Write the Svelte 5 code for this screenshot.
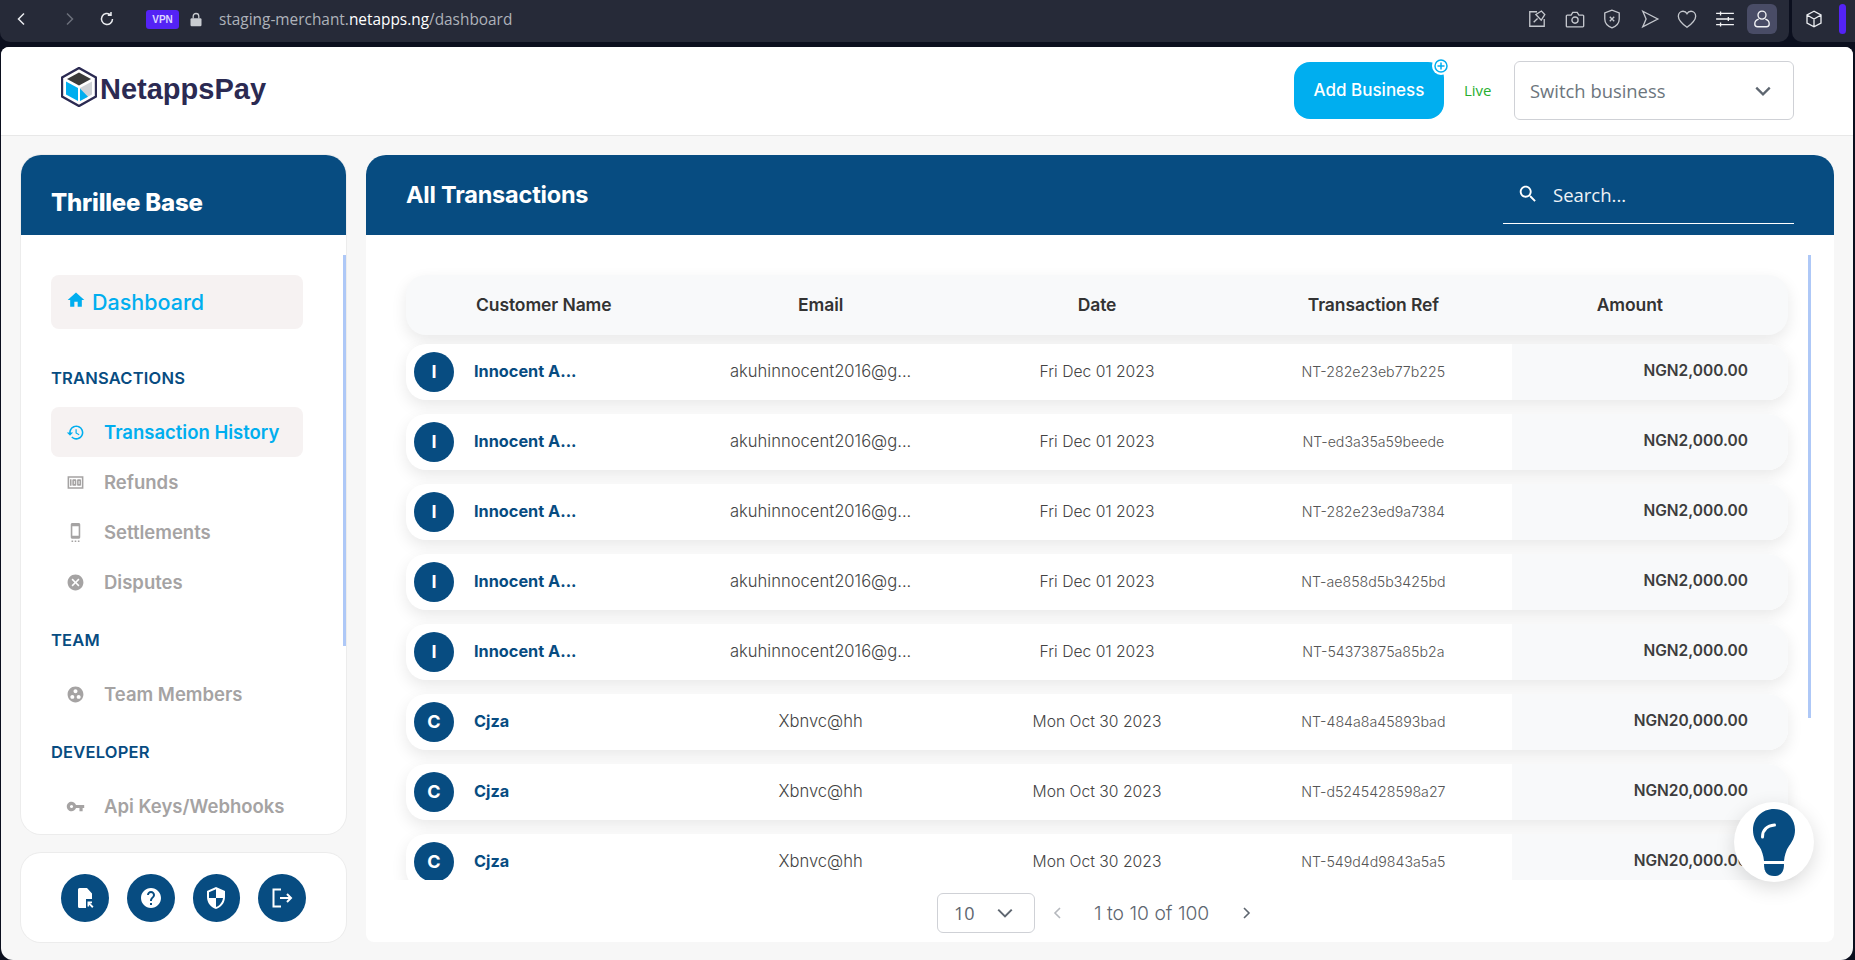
<script>
  const P = {
    home: 'M10 20v-6h4v6h5v-8h3L12 3 2 12h3v8z',
    history: 'M13 3c-4.97 0-9 4.03-9 9H1l3.89 3.89.07.14L9 12H6c0-3.87 3.13-7 7-7s7 3.13 7 7-3.13 7-7 7c-1.93 0-3.68-.79-4.94-2.06l-1.42 1.42C8.27 19.99 10.51 21 13 21c4.97 0 9-4.03 9-9s-4.03-9-9-9zm-1 5v5l4.28 2.54.72-1.21-3.5-2.08V8H12z',
    money: 'M5 8h2v8H5zm7 0H9c-.55 0-1 .45-1 1v6c0 .55.45 1 1 1h3c.55 0 1-.45 1-1V9c0-.55-.45-1-1-1zm-1 6h-1v-4h1v4zm7-6h-3c-.55 0-1 .45-1 1v6c0 .55.45 1 1 1h3c.55 0 1-.45 1-1V9c0-.55-.45-1-1-1zm-1 6h-1v-4h1v4zM2 4v16h20V4H2zm2 14V6h16v12H4z',
    cell: 'M7 24h2v-2H7v2zm4 0h2v-2h-2v2zm4 0h2v-2h-2v2zM16 .01 8 0C6.9 0 6 .9 6 2v16c0 1.1.9 2 2 2h8c1.1 0 2-.9 2-2V2c0-1.1-.9-1.99-2-1.99zM16 16H8V4h8v12z',
    cancel: 'M12 2C6.47 2 2 6.47 2 12s4.47 10 10 10 10-4.47 10-10S17.53 2 12 2zm5 13.59L15.59 17 12 13.41 8.41 17 7 15.59 10.59 12 7 8.41 8.41 7 12 10.59 15.59 7 17 8.41 13.41 12 17 15.59z',
    group: 'M12 2C6.48 2 2 6.48 2 12s4.48 10 10 10 10-4.48 10-10S17.52 2 12 2zM8 17.5c-1.38 0-2.5-1.12-2.5-2.5s1.12-2.5 2.5-2.5 2.5 1.12 2.5 2.5-1.12 2.5-2.5 2.5zM9.5 8c0-1.38 1.12-2.5 2.5-2.5s2.5 1.12 2.5 2.5-1.12 2.5-2.5 2.5S9.5 9.38 9.5 8zm6.5 9.5c-1.38 0-2.5-1.12-2.5-2.5s1.12-2.5 2.5-2.5 2.5 1.12 2.5 2.5-1.12 2.5-2.5 2.5z',
    key: 'M12.65 10C11.83 7.67 9.61 6 7 6c-3.31 0-6 2.69-6 6s2.69 6 6 6c2.61 0 4.83-1.67 5.65-4H17v4h4v-4h2v-4H12.65zM7 14c-1.1 0-2-.9-2-2s.9-2 2-2 2 .9 2 2-.9 2-2 2z',
    help: 'M12 2C6.48 2 2 6.48 2 12s4.48 10 10 10 10-4.48 10-10S17.52 2 12 2zm1 17h-2v-2h2v2zm2.07-7.75-.9.92C13.45 12.9 13 13.5 13 15h-2v-.5c0-1.1.45-2.1 1.17-2.83l1.24-1.26c.37-.36.59-.86.59-1.41 0-1.1-.9-2-2-2s-2 .9-2 2H8c0-2.21 1.79-4 4-4s4 1.79 4 4c0 .88-.36 1.68-.93 2.25z',
    shield: 'M12 1 3 5v6c0 5.55 3.84 10.74 9 12 5.16-1.26 9-6.45 9-12V5l-9-4zm0 10.99h7c-.53 4.12-3.28 7.79-7 8.94V12H5V6.3l7-3.11v8.8z',
    search: 'M15.5 14h-.79l-.28-.27C15.41 12.59 16 11.11 16 9.5 16 5.91 13.09 3 9.5 3S3 5.91 3 9.5 5.91 16 9.5 16c1.61 0 3.09-.59 4.23-1.57l.27.28v.79l5 4.99L20.49 19l-4.99-5zm-6 0C7.01 14 5 11.99 5 9.5S7.01 5 9.5 5 14 7.01 14 9.5 11.99 14 9.5 14z'
  };
  const groups = [
    { title: 'TRANSACTIONS', first: true, items: [
      { label: 'Transaction History', icon: P.history, active: true },
      { label: 'Refunds', icon: P.money },
      { label: 'Settlements', icon: P.cell },
      { label: 'Disputes', icon: P.cancel }
    ]},
    { title: 'TEAM', items: [{ label: 'Team Members', icon: P.group }] },
    { title: 'DEVELOPER', items: [{ label: 'Api Keys/Webhooks', icon: P.key }] }
  ];
  const inno = { i: 'I', name: 'Innocent A...', email: 'akuhinnocent2016@g...', date: 'Fri Dec 01 2023', amount: 'NGN2,000.00' };
  const cjza = { i: 'C', name: 'Cjza', email: 'Xbnvc@hh', date: 'Mon Oct 30 2023', amount: 'NGN20,000.00' };
  const rows = [
    { ...inno, ref: 'NT-282e23eb77b225' },
    { ...inno, ref: 'NT-ed3a35a59beede' },
    { ...inno, ref: 'NT-282e23ed9a7384' },
    { ...inno, ref: 'NT-ae858d5b3425bd' },
    { ...inno, ref: 'NT-54373875a85b2a' },
    { ...cjza, ref: 'NT-484a8a45893bad' },
    { ...cjza, ref: 'NT-d5245428598a27' },
    { ...cjza, ref: 'NT-549d4d9843a5a5' }
  ];
</script>

<div class="chrome">
  <div class="bar">
    <svg class="nav back" viewBox="0 0 16 16"><path d="M10 2.5 4.5 8l5.5 5.5" /></svg>
    <svg class="nav fwd" viewBox="0 0 16 16"><path d="M6 2.5 11.5 8 6 13.5" /></svg>
    <svg class="nav reload" viewBox="0 0 16 16"><path d="M13.5 8A5.5 5.5 0 1 1 11.6 3.8M12 1v3.2H8.8" /></svg>
    <span class="vpn">VPN</span>
    <svg class="lock" viewBox="0 0 12 14"><path class="shackle" d="M3.2 6V3.8a2.8 2.8 0 0 1 5.6 0V6" /><rect x="0.5" y="5.8" width="11" height="8" rx="1.2" /></svg>
    <span class="url">staging-merchant.<b>netapps.ng</b>/dashboard</span>
    <div class="tools">
      <svg viewBox="0 0 18 18"><path d="M9 2.5H2.5v13h13V9M6 12l3.5-3.5M8 5l5-3.2L16 5l-3.2 5z" /></svg>
      <svg viewBox="0 0 18 18"><path d="M2 5.5h3.5L7 3h4l1.5 2.5H16a.8.8 0 0 1 .8.8v9a.8.8 0 0 1-.8.8H2a.8.8 0 0 1-.8-.8v-9a.8.8 0 0 1 .8-.8z" /><circle cx="9" cy="10" r="2.8" /></svg>
      <svg viewBox="0 0 18 18"><path d="M9 1 2.5 3.5V9c0 4 3 6.600 6.500 8 3.500-1.400 6.500-4 6.500-8V3.500zM7 7l4 4M11 7l-4 4" /></svg>
      <svg viewBox="0 0 18 18"><path d="M2.500 2 16 9 2.500 16l3-7z" /></svg>
      <svg viewBox="0 0 18 18"><path d="M9 16.500C4 12.800 1.200 10 1.200 6.500 1.200 3.800 3.200 2 5.400 2 7 2 8.300 2.900 9 4.200 9.700 2.900 11 2 12.600 2c2.200 0 4.200 1.800 4.200 4.500 0 3.500-2.800 6.300-7.800 10z" /></svg>
      <svg class="strong" viewBox="0 0 18 18"><path d="M1 4h16M1 9h16M1 14h16M5 2.200v3.600M12 7.200v3.600M5 12.200v3.600" /></svg>
      <span class="profile"><svg viewBox="0 0 18 18"><circle cx="9" cy="5.500" r="3.600" /><path d="M6 9.200C3.500 10 2.500 11.800 2.500 13.500c0 1.500 1 2.500 2.500 2.500h8c1.500 0 2.500-1 2.500-2.500 0-1.700-1-3.500-3.500-4.300" /></svg></span>
    </div>
  </div>
  <div class="bar2">
    <svg viewBox="0 0 18 18"><path d="M9 1.200 2 5v8l7 3.800L16 13V5zM2 5l7 4 7-4M9 9v7.800" /></svg>
    <span class="purple"></span>
  </div>
</div>

<div class="app">
  <header class="top">
    <div class="logo">
      <svg viewBox="0 0 36 40" width="36" height="40">
        <path d="M18 1 35 10.500v19L18 39 1 29.500v-19z" fill="#fff" stroke="#2b2a52" stroke-width="2.400" />
        <path d="M18 5.500 30 12 18 18.500 6 12z" fill="#3a3a3a" />
        <path d="M5 14.500 17 21v13L5 27.500z" fill="#00aeef" />
        <path d="M19 21 31 14.500v13l-12 6.500z" fill="#cfd2d6" />
        <path d="M19 21.500 27 29.800 19 34z" fill="#00aeef" />
      </svg>
      <span>NetappsPay</span>
    </div>
    <div class="add">Add Business
      <svg class="plus" viewBox="0 0 18 18"><circle cx="9" cy="9" r="9" fill="#fff" /><circle cx="9" cy="9" r="6" fill="none" stroke="#00aeef" stroke-width="1.500" /><path d="M9 5.500v7M5.500 9h7" stroke="#00aeef" stroke-width="1.500" /></svg>
    </div>
    <span class="live">Live</span>
    <div class="switch">
      <span>Switch business</span>
      <svg viewBox="0 0 16 16"><path d="m2 5 6 6 6-6" /></svg>
    </div>
  </header>

  <div class="body">
    <aside class="side">
      <section class="side-card">
        <h2>Thrillee Base</h2>
        <nav>
          <div class="dash"><svg viewBox="0 0 24 24"><path d={P.home} /></svg><span>Dashboard</span></div>
          {#each groups as g}
            <h3 class:first={g.first}>{g.title}</h3>
            {#each g.items as it}
              <div class="item" class:active={it.active}>
                <svg viewBox="0 0 24 24"><path d={it.icon} /></svg>
                <span>{it.label}</span>
              </div>
            {/each}
          {/each}
        </nav>
        <i class="thumb side-thumb"></i>
      </section>
      <section class="foot-card">
        <span class="round"><svg viewBox="0 0 24 24"><path d="M6.500 2H14l5 5.500V13h-6v9H6.500A1.500 1.500 0 0 1 5 20.500v-17A1.500 1.500 0 0 1 6.500 2zM14.500 15.500h4.500v1.800h-1.800l3.300 3.300-1.300 1.300-3.100-3.200v1.800h-1.600z" /></svg></span>
        <span class="round"><svg viewBox="0 0 24 24"><path d={P.help} /></svg></span>
        <span class="round"><svg viewBox="0 0 24 24"><path d={P.shield} /></svg></span>
        <span class="round"><svg class="logout" viewBox="0 0 24 24"><path d="M11 3.500H3.500v17H11M10 12h11M17 8l4 4-4 4" /></svg></span>
      </section>
    </aside>

    <main class="main">
      <div class="main-head">
        <h1>All Transactions</h1>
        <div class="search">
          <svg viewBox="0 0 24 24"><path d={P.search} /></svg>
          <span>Search...</span>
        </div>
      </div>
      <div class="list">
        <div class="row head">
          <div class="th-name">Customer Name</div>
          <div>Email</div>
          <div>Date</div>
          <div>Transaction Ref</div>
          <div class="th-amount">Amount</div>
        </div>
        {#each rows as r}
          <div class="row">
            <div class="who"><span class="avatar">{r.i}</span><span class="name">{r.name}</span></div>
            <div class="mail">{r.email}</div>
            <div class="date">{r.date}</div>
            <div class="ref">{r.ref}</div>
            <div class="amount">{r.amount}</div>
          </div>
        {/each}
        <i class="thumb main-thumb"></i>
      </div>
      <div class="pager">
        <div class="size"><span>10</span><svg viewBox="0 0 16 16"><path d="m2 5 6 6 6-6" /></svg></div>
        <svg class="chev dim" viewBox="0 0 16 16"><path d="M10 3 5 8l5 5" /></svg>
        <span class="count">1 to 10 of 100</span>
        <svg class="chev" viewBox="0 0 16 16"><path d="m6 3 5 5-5 5" /></svg>
      </div>
    </main>
  </div>

  <div class="bulb">
    <svg viewBox="0 0 42 67" width="42" height="67">
      <path d="M21 0C9 0 0 9 0 21c0 7 3 12 6 16 3 4 4.500 10 5 15h20c.5-5 2-11 5-15 3-4 6-9 6-16C42 9 33 0 21 0z" fill="#074c81" />
      <path d="M9.500 28C9.500 21 14 16.500 21.500 16" fill="none" stroke="#fff" stroke-width="3" stroke-linecap="round" />
      <path d="M11 55h20c0 8-3 12-10 12s-10-4-10-12z" fill="#074c81" />
    </svg>
  </div>
</div>

<style>
  :global(body) {
    margin: 0;
    background: #0b0f1e;
    font-family: Inter, "Liberation Sans", sans-serif;
  }
  h1, h2, h3 { margin: 0; }

  .chrome {
    display: flex;
    gap: 3px;
    height: 42px;
    margin-bottom: 5px;
  }
  .bar, .bar2 {
    background: #262a38;
    display: flex;
    align-items: center;
    height: 42px;
    box-sizing: border-box;
    padding-bottom: 4px;
  }
  .bar {
    width: 1789px;
    border-radius: 0 0 10px 10px;
    color: #aeb2ba;
    font-family: "Open Sans", sans-serif;
  }
  .bar2 {
    flex: 1;
    border-radius: 0 0 0 10px;
  }
  .bar2 svg {
    width: 18px;
    height: 18px;
    margin-left: 13px;
    fill: none;
    stroke: #eceef2;
    stroke-width: 1.300;
  }
  .purple {
    width: 7px;
    height: 30px;
    margin-left: 16px;
    border-radius: 4px;
    background: #5423f5;
  }
  .nav {
    width: 16px;
    height: 16px;
    fill: none;
    stroke: #e9ebef;
    stroke-width: 1.500;
  }
  .back { margin-left: 14px; }
  .fwd { margin-left: 31px; stroke: #6b6f7a; }
  .reload { margin-left: 22px; }
  .vpn {
    margin-left: 31px;
    width: 33px;
    height: 19px;
    border-radius: 3px;
    background: #5423f5;
    color: #dcd6ff;
    font: 700 10px/19px "Liberation Sans", sans-serif;
    text-align: center;
  }
  .lock {
    width: 12px;
    height: 15px;
    margin-left: 11px;
    fill: #c9ccd1;
  }
  .shackle { fill: none; stroke: #c9ccd1; stroke-width: 1.300; }
  .url {
    margin-left: 17px;
    font-size: 15.400px;
  }
  .url b { font-weight: 400; color: #fff; }
  .tools {
    margin-left: auto;
    margin-right: 12px;
    display: flex;
    align-items: center;
    gap: 17.500px;
  }
  .tools svg {
    width: 20px;
    height: 20px;
    fill: none;
    stroke: #c4c7cd;
    stroke-width: 1.200;
    display: block;
  }
  .tools .strong { stroke: #f2f3f5; }
  .profile {
    width: 30px;
    height: 30px;
    margin-left: -5px;
    border-radius: 6px;
    background: #494c66;
    display: flex;
    align-items: center;
    justify-content: center;
  }
  .profile svg { stroke: #f2f3f5; }

  .app {
    position: relative;
    margin: 0 2px 0 1px;
    height: 913px;
    border-radius: 8px 8px 12px 12px;
    background: #f7f7f7;
    overflow: hidden;
    display: flex;
    flex-direction: column;
  }
  .top {
    height: 89px;
    flex: none;
    box-sizing: border-box;
    background: #fff;
    border-bottom: 1px solid #e8e8e8;
    display: flex;
    align-items: center;
    padding: 0 59px 0 60px;
  }
  .logo {
    display: flex;
    align-items: center;
    gap: 3px;
    margin-right: auto;
    margin-top: -8px;
    color: #2b2a52;
    font: 700 29px "Liberation Sans", sans-serif;
  }
  .logo span { padding-top: 4px; }
  .add {
    position: relative;
    width: 150px;
    height: 57px;
    margin-top: -1px;
    border-radius: 16px;
    background: #00aeef;
    color: #fff;
    font-size: 17px;
    font-weight: 500;
    line-height: 57px;
    text-align: center;
  }
  .plus {
    position: absolute;
    right: -6px;
    top: -5px;
    width: 18px;
    height: 18px;
  }
  .live {
    margin-left: 20px;
    width: 50px;
    margin-top: -3px;
    color: #27ae2f;
    font: 400 15px "Open Sans", sans-serif;
  }
  .switch {
    box-sizing: border-box;
    width: 280px;
    height: 59px;
    margin-top: -1px;
    border: 1px solid #cfd1d6;
    border-radius: 6px;
    padding: 0 21px 0 15px;
    display: flex;
    align-items: center;
    justify-content: space-between;
    color: #6c757d;
    font: 400 18.400px "Open Sans", sans-serif;
  }
  .switch svg {
    width: 18px;
    height: 18px;
    fill: none;
    stroke: #5e6670;
    stroke-width: 2;
  }

  .body {
    flex: 1;
    min-height: 0;
    display: flex;
    gap: 20px;
    padding: 19px 19px 18px 20px;
  }
  .side {
    width: 325px;
    flex: none;
    display: flex;
    flex-direction: column;
    gap: 19px;
  }
  .side-card {
    position: relative;
    flex: 1;
    min-height: 0;
    overflow: hidden;
    background: #fff;
    border-radius: 20px;
    box-shadow: 0 0 0 1px #ececec;
  }
  .side-card h2 {
    height: 80px;
    box-sizing: border-box;
    padding: 33px 30px 0;
    background: #074c81;
    color: #fff;
    font-size: 24px;
    font-weight: 800;
    line-height: 30px;
    letter-spacing: -0.2px;
  }
  nav {
    padding: 40px 43px 0 30px;
  }
  .dash {
    height: 54px;
    border-radius: 8px;
    background: #f6f2f2;
    display: flex;
    align-items: center;
    gap: 6px;
    padding-left: 15px;
    color: #00aeef;
    font-size: 21.500px;
    font-weight: 500;
  }
  .dash svg {
    width: 20px;
    height: 20px;
    fill: #00aeef;
    margin-top: -5px;
  }
  nav h3 {
    height: 62px;
    box-sizing: border-box;
    padding-top: 23px;
    color: #074c81;
    font-size: 16.500px;
    line-height: 20px;
    font-weight: 600;
    letter-spacing: 0.2px;
  }
  nav h3.first {
    height: 78px;
    padding-top: 39px;
  }
  .item {
    height: 50px;
    display: flex;
    align-items: center;
    padding-left: 15px;
    border-radius: 8px;
    color: #a5a3a3;
    font-size: 18.500px;
    font-weight: 600;
  }
  .item svg {
    width: 19px;
    height: 19px;
    flex: none;
    margin-right: 19px;
    fill: #a5a3a3;
  }
  .item.active {
    color: #00aeef;
    background: #f6f2f2;
  }
  .item.active svg { fill: #00aeef; }
  .thumb {
    position: absolute;
    width: 3px;
    background: #aec8f7;
  }
  .side-thumb { right: 0; top: 100px; height: 391px; }

  .foot-card {
    height: 89px;
    flex: none;
    box-sizing: border-box;
    background: #fff;
    border-radius: 20px;
    box-shadow: 0 0 0 1px #ececec;
    display: flex;
    align-items: center;
    gap: 18px;
    padding: 0 40px;
  }
  .round {
    width: 48px;
    height: 48px;
    border-radius: 50%;
    background: #074c81;
    display: flex;
    align-items: center;
    justify-content: center;
  }
  .round svg {
    width: 24px;
    height: 24px;
    fill: #fff;
  }
  .round .logout {
    fill: none;
    stroke: #fff;
    stroke-width: 2;
  }

  .main {
    flex: 1;
    min-width: 0;
    display: flex;
    flex-direction: column;
    background: #fff;
    border-radius: 20px 20px 8px 8px;
    overflow: hidden;
  }
  .main-head {
    height: 80px;
    flex: none;
    background: #074c81;
    display: flex;
    align-items: center;
    justify-content: space-between;
    padding: 0 40px;
    color: #fff;
  }
  .main-head h1 {
    font-size: 23.500px;
    font-weight: 700;
    margin-top: -2px;
    letter-spacing: -0.2px;
  }
  .search {
    width: 291px;
    height: 68px;
    box-sizing: border-box;
    margin-top: -10px;
    border-bottom: 1px solid #fff;
    display: flex;
    align-items: center;
    gap: 14px;
    padding-left: 14px;
    padding-top: 10px;
    font: 400 18.500px "Open Sans", sans-serif;
    color: #eef3f7;
  }
  .search svg {
    width: 22px;
    height: 22px;
    fill: #fff;
    margin-top: -2px;
  }
  .list {
    position: relative;
    flex: 1;
    min-height: 0;
    overflow: hidden;
    box-sizing: border-box;
    padding: 40px 46px 0 40px;
    display: flex;
    flex-direction: column;
    gap: 14px;
  }
  .main-thumb { right: 23px; top: 20px; height: 463px; }
  .row {
    flex: none;
    height: 56px;
    display: grid;
    grid-template-columns: repeat(5, 1fr);
    align-items: stretch;
    border-radius: 20px;
    background: #fff;
    box-shadow: 0 6px 16px rgba(0, 0, 0, 0.09);
    overflow: hidden;
    font-size: 15px;
  }
  .row > div {
    display: flex;
    align-items: center;
    justify-content: center;
  }
  .row.head {
    height: 60px;
    margin-bottom: -5px;
    background: #f8f9fa;
    color: #333;
    font-size: 17.500px;
    font-weight: 600;
    letter-spacing: -0.1px;
  }
  .row.head > div { padding-bottom: 2px; }
  .row.head > .th-name {
    justify-content: flex-start;
    padding-left: 70px;
  }
  .row.head > .th-amount { padding-right: 40px; }
  .row > .who {
    justify-content: flex-start;
    padding-left: 8px;
    gap: 20px;
  }
  .avatar {
    width: 40px;
    height: 40px;
    flex: none;
    border-radius: 50%;
    background: #074c81;
    color: #fff;
    font-size: 18px;
    font-weight: 700;
    line-height: 40px;
    text-align: center;
  }
  .name {
    color: #074c81;
    font-weight: 700;
    font-size: 16.300px;
    margin-bottom: 2px;
  }
  .row > .mail, .row > .date, .row > .ref { padding-bottom: 2px; }
  .mail { color: #444; font-weight: 300; font-size: 16.600px; }
  .date { color: #444; font-weight: 300; font-size: 15.700px; }
  .ref { color: #555; font-weight: 300; font-size: 14.200px; }
  .row > .amount {
    background: #f8f9fa;
    justify-content: flex-end;
    padding: 0 40px 4px 0;
    color: #3d3d3d;
    font-size: 15.500px;
    font-weight: 600;
  }
  .pager {
    height: 62px;
    flex: none;
    box-sizing: border-box;
    padding-top: 4px;
    display: flex;
    align-items: center;
    padding-left: 571px;
    color: #5e6670;
  }
  .size {
    box-sizing: border-box;
    width: 98px;
    height: 40px;
    border: 1px solid #cfd1d6;
    border-radius: 6px;
    display: flex;
    align-items: center;
    justify-content: space-between;
    padding: 0 20px 0 16px;
    font: 400 18px "Open Sans", sans-serif;
  }
  .size svg {
    width: 18px;
    height: 18px;
    fill: none;
    stroke: #5e6670;
    stroke-width: 1.800;
  }
  .chev {
    width: 16px;
    height: 16px;
    margin-left: 15px;
    fill: none;
    stroke: #5e6670;
    stroke-width: 1.600;
  }
  .chev.dim { stroke: #b5b8bd; }
  .count {
    margin: 0 27px 0 28px;
    font-size: 19.300px;
    font-weight: 300;
    width: 117px;
    white-space: nowrap;
  }
  .count + .chev { margin-left: 0; }
  .bulb {
    position: absolute;
    left: 1733px;
    top: 755px;
    width: 80px;
    height: 80px;
    border-radius: 50%;
    background: #fff;
    box-shadow: 0 6px 20px rgba(0, 0, 0, 0.14);
    display: flex;
    align-items: center;
    justify-content: center;
  }
</style>
